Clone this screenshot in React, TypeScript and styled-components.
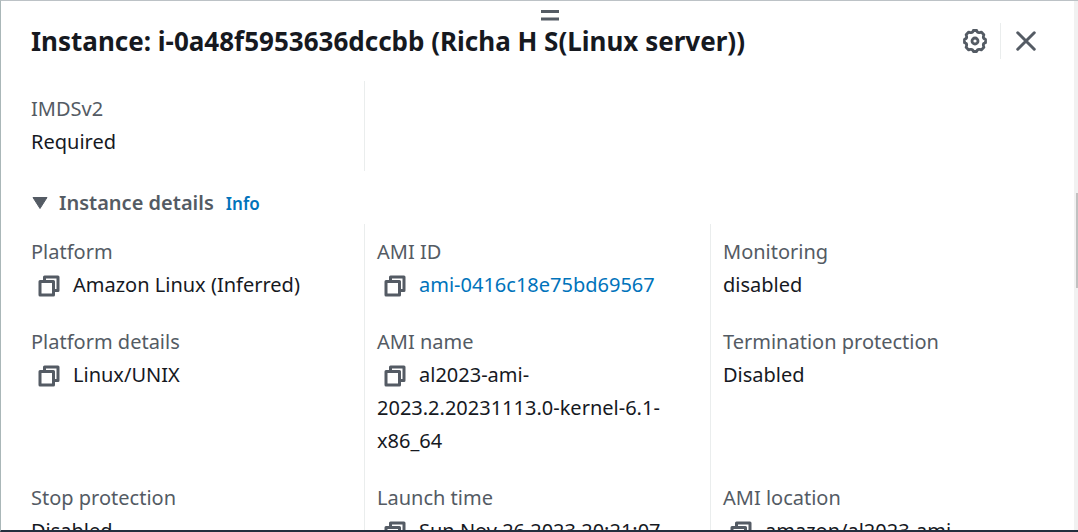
import React from "react";
import styled, { createGlobalStyle } from "styled-components";

const GlobalStyle = createGlobalStyle`
  *, *::before, *::after { box-sizing: border-box; }
  body {
    margin: 0;
    background: #ffffff;
    color: #16191f;
    font-family: "Noto Sans", "Open Sans", sans-serif;
    font-size: 20px;
    line-height: 33px;
  }
`;

const Panel = styled.section`
  display: flex;
  height: 100vh;
  overflow: hidden;
  border-top: 1px solid #bcc2c6;
  border-left: 1px solid #aab7b8;
  border-bottom: 2px solid #232f3e;
`;

const Main = styled.div`
  display: flex;
  flex-direction: column;
  flex: 1;
  min-width: 0;
`;

const Header = styled.header`
  display: flex;
  flex: none;
  flex-direction: column;
  height: 80px;
  padding: 9px 0 0 24px;
`;

const Handle = styled.button`
  align-self: center;
  display: flex;
  padding: 0;
  border: 0;
  background: none;
  color: #545b64;
  cursor: ns-resize;
`;

const TitleRow = styled.div`
  display: flex;
  align-items: center;
  justify-content: space-between;
  height: 40px;
  padding: 0 24px 0 6px;
`;

const Title = styled.h2`
  margin: 0;
  font-size: 26px;
  font-weight: 700;
  line-height: 40px;
  white-space: nowrap;
`;

const Actions = styled.div`
  display: flex;
  align-items: center;
`;

const IconButton = styled.button`
  display: flex;
  padding: 0 13px;
  border: 0;
  background: none;
  color: #545b64;
  cursor: pointer;

  & + & {
    padding: 6px 12px 6px 13px;
    border-left: 1px solid #eaeded;
  }
`;

const Body = styled.div`
  flex: 1;
  min-height: 0;
  overflow: hidden;
  padding: 0 18px 0 17px;
`;

const Columns = styled.div`
  display: grid;
  grid-template-columns: repeat(3, 1fr);
`;

const Column = styled.dl<{ $divided?: boolean }>`
  display: flex;
  flex-direction: column;
  gap: 24px;
  min-width: 0;
  margin: 0;
  padding: 11px 12px 13px;
  border-left: 1px solid ${(p) => (p.$divided ? "#eaeded" : "transparent")};
`;

const Field = styled.div<{ $lines?: number }>`
  min-height: ${(p) => 33 * (1 + (p.$lines ?? 1))}px;
`;

const Label = styled.dt`
  color: #545b64;
`;

const Value = styled.dd`
  margin: 0;
`;

const CopyButton = styled.button`
  display: inline-flex;
  margin: 0 12px 0 6px;
  padding: 0;
  border: 0;
  background: none;
  color: #545b64;
  vertical-align: -6px;
  cursor: pointer;
`;

const Link = styled.a`
  color: #0073bb;
  text-decoration: none;
`;

const SectionHeader = styled.div`
  display: flex;
  align-items: center;
  gap: 12px;
  height: 53px;
  padding: 10px 13px 0;
`;

const Toggle = styled.button`
  display: flex;
  align-items: center;
  gap: 10px;
  padding: 0;
  border: 0;
  background: none;
  color: #545b64;
  font: inherit;
  font-weight: 600;
  cursor: pointer;
`;

const InfoLink = styled(Link)`
  padding-top: 1px;
  font-size: 17px;
  font-weight: 600;
`;

const Rail = styled.div`
  display: flex;
  flex: none;
  justify-content: flex-end;
  width: 4px;
  padding-top: 192px;
  background: #f1f1f1;
`;

const Thumb = styled.div`
  width: 2px;
  height: 95px;
  background: #c1c1c1;
`;

function CopyIcon() {
  return (
    <svg width="24" height="24" viewBox="0 0 16 16" fill="none" stroke="currentColor" strokeWidth="2" strokeLinejoin="round" aria-hidden="true">
      <path d="M2 5h9v9H2z" />
      <path d="M5 5V2h9v9h-3" />
    </svg>
  );
}

function GearIcon() {
  return (
    <svg width="24" height="24" viewBox="0 0 24 24" fill="none" stroke="currentColor" strokeWidth="2.8" strokeLinejoin="round" aria-hidden="true">
      <path d="M10.300 1.500h3.400q.6 2.600 3 2.100l1.600-.5 2.600 2.600-.5 1.600q-.5 2.400 2.100 3v3.400q-2.600.6-2.100 3l.5 1.600-2.600 2.600-1.600-.5q-2.400-.5-3 2.100h-3.400q-.6-2.600-3-2.100l-1.600.5-2.600-2.600.5-1.600q.5-2.400-2.100-3v-3.400q2.600-.6 2.100-3l-.5-1.600 2.600-2.600 1.600.5q2.400.5 3-2.100z" />
      <circle cx="12" cy="12" r="3" />
    </svg>
  );
}

function CloseIcon() {
  return (
    <svg width="24" height="24" viewBox="0 0 16 16" fill="none" stroke="currentColor" strokeWidth="2" strokeLinecap="round" aria-hidden="true">
      <path d="m2.500 2.500 11 11M13.500 2.500l-11 11" />
    </svg>
  );
}

type FieldData = { label: string; value: string; copy?: boolean; href?: string; lines?: number };

const details: FieldData[][] = [
  [
    { label: "Platform", value: "Amazon Linux (Inferred)", copy: true },
    { label: "Platform details", value: "Linux/UNIX", copy: true, lines: 3 },
    { label: "Stop protection", value: "Disabled" },
  ],
  [
    { label: "AMI ID", value: "ami-0416c18e75bd69567", copy: true, href: "#ami" },
    { label: "AMI name", value: "al2023-ami-2023.2.20231113.0-kernel-6.1-x86_64", copy: true, lines: 3 },
    { label: "Launch time", value: "Sun Nov 26 2023 20:21:07", copy: true },
  ],
  [
    { label: "Monitoring", value: "disabled" },
    { label: "Termination protection", value: "Disabled", lines: 3 },
    { label: "AMI location", value: "amazon/al2023-ami-", copy: true },
  ],
];

function DetailField({ label, value, copy, href, lines }: FieldData) {
  return (
    <Field $lines={lines}>
      <Label>{label}</Label>
      <Value>
        {copy && (
          <CopyButton type="button" aria-label={`Copy ${label}`}>
            <CopyIcon />
          </CopyButton>
        )}
        {href ? <Link href={href}>{value}</Link> : value}
      </Value>
    </Field>
  );
}

export default function App() {
  return (
    <>
      <GlobalStyle />
      <Panel>
        <Main>
          <Header>
            <Handle type="button" aria-label="Resize panel">
              <svg width="18" height="11" viewBox="0 0 18 11" fill="currentColor" aria-hidden="true">
                <path d="M0 0h18v3H0zM0 7.500h18v3H0z" />
              </svg>
            </Handle>
            <TitleRow>
              <Title>Instance: i-0a48f5953636dccbb (Richa H S(Linux server))</Title>
              <Actions>
                <IconButton type="button" aria-label="Preferences"><GearIcon /></IconButton>
                <IconButton type="button" aria-label="Close"><CloseIcon /></IconButton>
              </Actions>
            </TitleRow>
          </Header>
          <Body>
            <Columns>
              <Column><DetailField label="IMDSv2" value="Required" /></Column>
              <Column $divided />
            </Columns>
            <SectionHeader>
              <Toggle type="button" aria-expanded="true">
                <svg width="18" height="12" viewBox="0 0 18 12" fill="currentColor" stroke="currentColor" strokeLinejoin="round" aria-hidden="true">
                  <path d="M2 .5h14L9 11.500z" />
                </svg>
                Instance details
              </Toggle>
              <InfoLink href="#info">Info</InfoLink>
            </SectionHeader>
            <Columns>
              {details.map((fields, i) => (
                <Column key={i} $divided={i > 0}>
                  {fields.map((f) => <DetailField key={f.label} {...f} />)}
                </Column>
              ))}
            </Columns>
          </Body>
        </Main>
        <Rail><Thumb /></Rail>
      </Panel>
    </>
  );
}
